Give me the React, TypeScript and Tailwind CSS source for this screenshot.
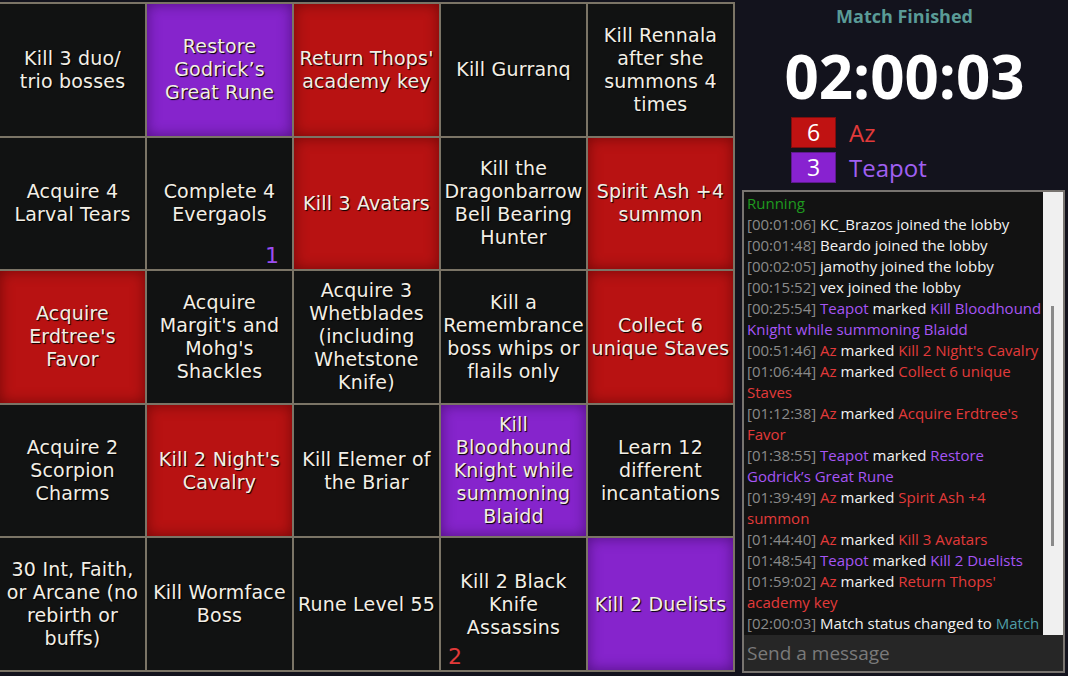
import React from "react";

type Color = "dark" | "red" | "purple";
type Cell = { lines: string[]; color: Color; badge?: { text: string; side: "left" | "right"; color: "red" | "purple" } };

const cells: Cell[] = [
  { lines: ["Kill 3 duo/", "trio bosses"], color: "dark" },
  { lines: ["Restore", "Godrick’s", "Great Rune"], color: "purple" },
  { lines: ["Return Thops'", "academy key"], color: "red" },
  { lines: ["Kill Gurranq"], color: "dark" },
  { lines: ["Kill Rennala", "after she", "summons 4", "times"], color: "dark" },
  { lines: ["Acquire 4", "Larval Tears"], color: "dark" },
  { lines: ["Complete 4", "Evergaols"], color: "dark", badge: { text: "1", side: "right", color: "purple" } },
  { lines: ["Kill 3 Avatars"], color: "red" },
  { lines: ["Kill the", "Dragonbarrow", "Bell Bearing", "Hunter"], color: "dark" },
  { lines: ["Spirit Ash +4", "summon"], color: "red" },
  { lines: ["Acquire", "Erdtree's", "Favor"], color: "red" },
  { lines: ["Acquire", "Margit's and", "Mohg's", "Shackles"], color: "dark" },
  { lines: ["Acquire 3", "Whetblades", "(including", "Whetstone", "Knife)"], color: "dark" },
  { lines: ["Kill a", "Remembrance", "boss whips or", "flails only"], color: "dark" },
  { lines: ["Collect 6", "unique Staves"], color: "red" },
  { lines: ["Acquire 2", "Scorpion", "Charms"], color: "dark" },
  { lines: ["Kill 2 Night's", "Cavalry"], color: "red" },
  { lines: ["Kill Elemer of", "the Briar"], color: "dark" },
  { lines: ["Kill", "Bloodhound", "Knight while", "summoning", "Blaidd"], color: "purple" },
  { lines: ["Learn 12", "different", "incantations"], color: "dark" },
  { lines: ["30 Int, Faith,", "or Arcane (no", "rebirth or", "buffs)"], color: "dark" },
  { lines: ["Kill Wormface", "Boss"], color: "dark" },
  { lines: ["Rune Level 55"], color: "dark" },
  { lines: ["Kill 2 Black", "Knife", "Assassins"], color: "dark", badge: { text: "2", side: "left", color: "red" } },
  { lines: ["Kill 2 Duelists"], color: "purple" },
];

const bgClass: Record<Color, string> = {
  dark: "bg-[#111212]",
  red: "bg-[#b81212] shadow-[inset_0_0_14px_rgba(60,0,0,0.55)]",
  purple: "bg-[#8624cc] shadow-[inset_0_0_14px_rgba(40,0,70,0.55)]",
};

type Seg = { t: string; c: "ts" | "w" | "red" | "pur" | "teal" | "green" };
const segClass: Record<Seg["c"], string> = {
  ts: "text-[#8a8a8a]",
  w: "text-[#f2f2f2]",
  red: "text-[#e23a3a]",
  pur: "text-[#a655f5]",
  teal: "text-[#4f9ea6]",
  green: "text-[#1f9a1f]",
};

const log: Seg[][] = [
  [{ t: "Running", c: "green" }],
  [{ t: "[00:01:06] ", c: "ts" }, { t: "KC_Brazos joined the lobby", c: "w" }],
  [{ t: "[00:01:48] ", c: "ts" }, { t: "Beardo joined the lobby", c: "w" }],
  [{ t: "[00:02:05] ", c: "ts" }, { t: "jamothy joined the lobby", c: "w" }],
  [{ t: "[00:15:52] ", c: "ts" }, { t: "vex joined the lobby", c: "w" }],
  [{ t: "[00:25:54] ", c: "ts" }, { t: "Teapot", c: "pur" }, { t: " marked ", c: "w" }, { t: "Kill Bloodhound Knight while summoning Blaidd", c: "pur" }],
  [{ t: "[00:51:46] ", c: "ts" }, { t: "Az", c: "red" }, { t: " marked ", c: "w" }, { t: "Kill 2 Night's Cavalry", c: "red" }],
  [{ t: "[01:06:44] ", c: "ts" }, { t: "Az", c: "red" }, { t: " marked ", c: "w" }, { t: "Collect 6 unique Staves", c: "red" }],
  [{ t: "[01:12:38] ", c: "ts" }, { t: "Az", c: "red" }, { t: " marked ", c: "w" }, { t: "Acquire Erdtree's Favor", c: "red" }],
  [{ t: "[01:38:55] ", c: "ts" }, { t: "Teapot", c: "pur" }, { t: " marked ", c: "w" }, { t: "Restore Godrick’s Great Rune", c: "pur" }],
  [{ t: "[01:39:49] ", c: "ts" }, { t: "Az", c: "red" }, { t: " marked ", c: "w" }, { t: "Spirit Ash +4 summon", c: "red" }],
  [{ t: "[01:44:40] ", c: "ts" }, { t: "Az", c: "red" }, { t: " marked ", c: "w" }, { t: "Kill 3 Avatars", c: "red" }],
  [{ t: "[01:48:54] ", c: "ts" }, { t: "Teapot", c: "pur" }, { t: " marked ", c: "w" }, { t: "Kill 2 Duelists", c: "pur" }],
  [{ t: "[01:59:02] ", c: "ts" }, { t: "Az", c: "red" }, { t: " marked ", c: "w" }, { t: "Return Thops' academy key", c: "red" }],
  [{ t: "[02:00:03] ", c: "ts" }, { t: "Match status changed to ", c: "w" }, { t: "Match Finished", c: "teal" }],
];

export default function App() {
  return (
    <div className="flex h-[676px] w-[1068px] overflow-hidden bg-[#13131d]">
      {/* Board */}
      <div className="mt-[2px] h-[670px] w-[735px] shrink-0 bg-[#7b7466] pb-[2px] pr-[2px] pt-[2px]">
        <div className="grid h-full w-full grid-cols-5 grid-rows-5 gap-[2px]">
          {cells.map((cell, i) => (
            <div
              key={i}
              className={`relative flex items-center justify-center text-center ${bgClass[cell.color]}`}
            >
              <div className="font-['DejaVu_Sans',sans-serif] text-[19px] leading-[23px] tracking-[0.2px] text-[#f3efe6] [text-shadow:1px_1px_1px_#000]">
                {cell.lines.map((l, j) => (
                  <div key={j} className="whitespace-nowrap">
                    {l}
                  </div>
                ))}
              </div>
              {cell.badge && (
                <span
                  className={`absolute bottom-[2px] font-['DejaVu_Sans',sans-serif] text-[22px] leading-none ${
                    cell.badge.side === "right" ? "right-[13px]" : "left-[7px]"
                  } ${cell.badge.color === "red" ? "text-[#e23a3a]" : "text-[#9b4df0]"}`}
                >
                  {cell.badge.text}
                </span>
              )}
            </div>
          ))}
        </div>
      </div>

      {/* Right panel */}
      <div className="flex min-w-0 flex-1 flex-col pl-[9px] pr-[3px] font-['Open_Sans',sans-serif]">
        <div className="pt-[4px] text-center text-[18px] font-bold leading-[24px] text-[#5a9b97]">Match Finished</div>
        <div className="mt-[18px] text-center text-[60px] font-bold leading-[60px] text-white">02:00:03</div>
        <div className="mt-[11px] flex flex-col gap-[4px] pl-[47px]">
          <div className="flex h-[31px] items-center">
            <div className="flex h-[31px] w-[45px] items-center justify-center border border-[#7e0e0e] bg-[#c01212] text-[23px] leading-none text-white">
              6
            </div>
            <span className="ml-[13px] text-[24px] leading-[31px] text-[#e23a3a]">Az</span>
          </div>
          <div className="flex h-[31px] items-center">
            <div className="flex h-[31px] w-[45px] items-center justify-center border border-[#5e1a8e] bg-[#8822d0] text-[23px] leading-none text-white">
              3
            </div>
            <span className="ml-[13px] text-[24px] leading-[31px] text-[#a060f2]">Teapot</span>
          </div>
        </div>

        {/* Chat */}
        <div className="mb-[3px] ml-[-2px] mt-[7px] flex min-h-0 flex-1 flex-col border-2 border-[#787470] bg-[#121212]">
          <div className="flex min-h-0 flex-1">
            <div className="min-w-0 flex-1 overflow-hidden pl-[3px] pt-[1px] text-[15px] leading-[21px]">
              {log.map((line, i) => (
                <div key={i}>
                  {line.map((s, j) => (
                    <span key={j} className={segClass[s.c]}>
                      {s.t}
                    </span>
                  ))}
                </div>
              ))}
            </div>
            <div className="relative w-[20px] shrink-0 bg-[#f0f0f0]">
              <div className="absolute left-[8px] top-[114px] h-[240px] w-[3px] bg-[#8a8a8a]" />
            </div>
          </div>
          <div className="flex h-[36px] items-center bg-[#262626] pl-[3px] text-[19px] text-[#7a7a7a]">
            Send a message
          </div>
        </div>
      </div>
    </div>
  );
}
